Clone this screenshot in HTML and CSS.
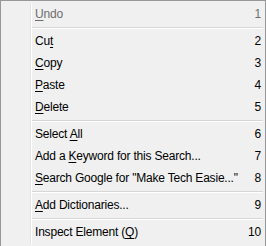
FILE: index.html
```html
<!DOCTYPE html>
<html lang="en">
<head>
    <meta charset="UTF-8">
    <title>Context Menu</title>
    <link rel="stylesheet" href="styles.css">
</head>
<body>
    <div class="menu">
        <div class="gutter"></div>
        <div class="items">
            <div class="item disabled"><span><u>U</u>ndo</span><span>1</span></div>
            <div class="sep"></div>
            <div class="item"><span>Cu<u>t</u></span><span>2</span></div>
            <div class="item"><span><u>C</u>opy</span><span>3</span></div>
            <div class="item"><span><u>P</u>aste</span><span>4</span></div>
            <div class="item"><span><u>D</u>elete</span><span>5</span></div>
            <div class="sep"></div>
            <div class="item"><span>Select <u>A</u>ll</span><span>6</span></div>
            <div class="item"><span>Add a <u>K</u>eyword for this Search...</span><span>7</span></div>
            <div class="item"><span><u>S</u>earch Google for "Make Tech Easie..."</span><span>8</span></div>
            <div class="sep"></div>
            <div class="item"><span><u>A</u>dd Dictionaries...</span><span>9</span></div>
            <div class="sep"></div>
            <div class="item"><span>Inspect Element (<u>Q</u>)</span><span>10</span></div>
        </div>
    </div>
</body>
</html>
```

FILE: styles.css
```css
body {
    margin: 0;
    font-family: "Liberation Sans", Arial, sans-serif;
    font-size: 12px;
    letter-spacing: -0.2px;
    color: #000;
}

.menu {
    display: flex;
    width: 264px;
    height: 242px;
    padding: 2px 0;
    background-color: #f0f0f0;
    border: 1px solid #979797;
}

.gutter {
    width: 29px;
    border-right: 1px solid #e2e2e2;
}

.items {
    flex: 1;
    display: flex;
    flex-direction: column;
    border-left: 1px solid #fff;
}

.item {
    display: flex;
    justify-content: space-between;
    align-items: center;
    height: 22px;
    padding: 0 4px 0 3px;
}

.item u {
    text-decoration-thickness: 1px;
    text-underline-offset: 2px;
}

.disabled {
    color: #6d6d6d;
}

.sep {
    height: 0;
    margin: 2px 2px 1px 0;
    border-top: 1px solid #d7d7d7;
    border-bottom: 1px solid #fff;
}
```
